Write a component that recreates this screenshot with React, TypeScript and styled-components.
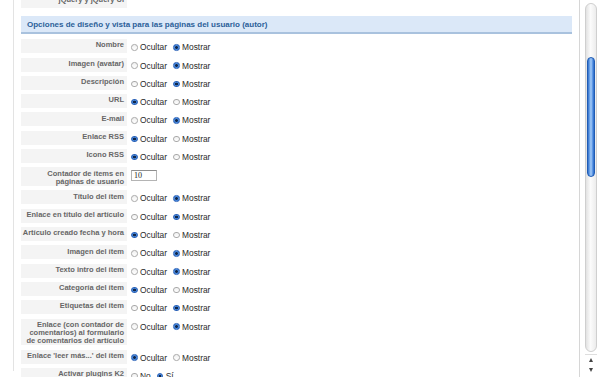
import React from 'react';
import styled, { createGlobalStyle } from 'styled-components';

type Choice = 'ocultar' | 'mostrar';

interface IParam {
  label: React.ReactNode;
  value?: Choice;
  input?: string;
  options?: [string, string];
}

const params: IParam[] = [
  { label: 'Nombre', value: 'mostrar' },
  { label: 'Imagen (avatar)', value: 'mostrar' },
  { label: 'Descripción', value: 'mostrar' },
  { label: 'URL', value: 'ocultar' },
  { label: 'E-mail', value: 'mostrar' },
  { label: 'Enlace RSS', value: 'ocultar' },
  { label: 'Icono RSS', value: 'ocultar' },
  {
    label: (
      <>
        Contador de ítems en
        <br />
        páginas de usuario
      </>
    ),
    input: '10',
  },
  { label: 'Título del ítem', value: 'mostrar' },
  { label: 'Enlace en título del artículo', value: 'mostrar' },
  { label: 'Artículo creado fecha y hora', value: 'ocultar' },
  { label: 'Imagen del ítem', value: 'mostrar' },
  { label: 'Texto intro del ítem', value: 'mostrar' },
  { label: 'Categoría del ítem', value: 'ocultar' },
  { label: 'Etiquetas del ítem', value: 'mostrar' },
  {
    label: (
      <>
        Enlace (con contador de
        <br />
        comentarios) al formulario
        <br />
        de comentarios del artículo
      </>
    ),
    value: 'mostrar',
  },
  { label: "Enlace 'leer más...' del ítem", value: 'ocultar' },
  { label: 'Activar plugins K2', value: 'mostrar', options: ['No', 'Sí'] },
];

export default function App() {
  return (
    <>
      <GlobalStyle />
      <Page>
        <Main>
          <Panel>
            <TopRow>
              <Key>jQuery y jQuery UI</Key>
              <Value />
            </TopRow>
            <Header>Opciones de diseño y vista para las páginas del usuario (autor)</Header>
            {params.map((p, i) => {
              const [off, on] = p.options ?? ['Ocultar', 'Mostrar'];
              return (
                <Row key={i}>
                  <Key>{p.label}</Key>
                  <Value>
                    {p.input !== undefined ? (
                      <TextInput>{p.input}</TextInput>
                    ) : (
                      <>
                        <Radio $checked={p.value === 'ocultar'} />
                        <Option>{off}</Option>
                        <Radio $checked={p.value === 'mostrar'} />
                        <Option>{on}</Option>
                      </>
                    )}
                  </Value>
                </Row>
              );
            })}
          </Panel>
        </Main>
        <Divider />
        <ScrollColumn>
          <Track>
            <Thumb />
          </Track>
          <Arrows>
            <ArrowUp />
            <ArrowDown />
          </Arrows>
        </ScrollColumn>
      </Page>
    </>
  );
}

const GlobalStyle = createGlobalStyle`
  html, body {
    margin: 0;
    padding: 0;
    background: #fff;
    overflow: hidden;
  }
  body {
    font-family: "Liberation Sans", Arial, sans-serif;
  }
`;

const Page = styled.div`
  display: flex;
  width: 600px;
  height: 377px;
  overflow: hidden;
`;

const Main = styled.div`
  width: 566px;
  padding: 0 7px 0 13px;
  overflow: hidden;
`;

const Panel = styled.div`
  border-left: 1px solid #e3e3e3;
  padding-left: 7px;
  height: 100%;
`;

const Row = styled.div`
  display: grid;
  grid-template-columns: 106px 1fr;
  column-gap: 1px;
  min-height: 14px;
  margin-bottom: 4.3px;
`;

const TopRow = styled(Row)`
  margin-top: -6px;
  margin-bottom: 8px;
`;

const Key = styled.div`
  background: #f4f4f4;
  color: #666;
  font-size: 7.5px;
  font-weight: bold;
  line-height: 8px;
  text-align: right;
  white-space: nowrap;
  padding: 2.2px 3px 0.6px 0;
`;

const Value = styled.div`
  display: flex;
  align-items: center;
  align-self: start;
  height: 14px;
  padding-left: 3px;
`;

const Header = styled.div`
  background: #dbe8f8;
  border-bottom: 2px solid #a9c2de;
  color: #2b5f98;
  font-size: 8px;
  font-weight: bold;
  height: 16px;
  line-height: 17px;
  padding-left: 6px;
  margin-bottom: 5.3px;
`;

const Radio = styled.span<{ $checked: boolean }>`
  box-sizing: border-box;
  width: 6.5px;
  height: 6.5px;
  border-radius: 50%;
  margin-top: 2px;
  flex-shrink: 0;
  border: 1px solid ${({ $checked }) => ($checked ? '#2b62b8' : '#a9a9a9')};
  background: ${({ $checked }) =>
    $checked
      ? 'radial-gradient(circle, #10264a 0 1.2px, #4d8ee0 1.6px, #3574cf 100%)'
      : 'linear-gradient(#f0f0f0, #ffffff)'};
`;

const Option = styled.span`
  font-size: 8.4px;
  color: #2a2a2a;
  margin: 2px 6px 0 2.5px;
`;

const TextInput = styled.div`
  box-sizing: border-box;
  width: 26px;
  height: 11px;
  margin-top: 2px;
  border: 1px solid #b4b4b4;
  border-top-color: #8e8e8e;
  background: #fff;
  font-family: "Liberation Serif", "Times New Roman", serif;
  font-size: 8px;
  line-height: 9px;
  padding-left: 2px;
  color: #222;
`;

const Divider = styled.div`
  width: 1px;
  background: #d6d6d6;
`;

const ScrollColumn = styled.div`
  width: 20px;
  display: flex;
  flex-direction: column;
  padding: 3px 3px 2px 5px;
  box-sizing: border-box;
`;

const Track = styled.div`
  flex: 1;
  border: 1px solid #cfcfcf;
  border-radius: 6px;
  background: linear-gradient(to right, #e2e2e2, #fbfbfb 45%, #ececec);
  padding: 0 1px;
`;

const Thumb = styled.div`
  margin-top: 53px;
  height: 118px;
  border: 1px solid #1f5cb5;
  border-radius: 5px;
  background: linear-gradient(to right, #2f6ecb, #7fb3f0 35%, #a9cdf7 50%, #4f8ee3 80%, #2d69c4);
`;

const Arrows = styled.div`
  height: 20px;
  display: flex;
  flex-direction: column;
  align-items: center;
  justify-content: space-around;
  border-top: 1px solid #dedede;
  margin-top: 2px;
`;

const ArrowUp = styled.span`
  width: 0;
  height: 0;
  border-left: 2.5px solid transparent;
  border-right: 2.5px solid transparent;
  border-bottom: 4px solid #444;
`;

const ArrowDown = styled.span`
  width: 0;
  height: 0;
  border-left: 2.5px solid transparent;
  border-right: 2.5px solid transparent;
  border-top: 4px solid #444;
`;
